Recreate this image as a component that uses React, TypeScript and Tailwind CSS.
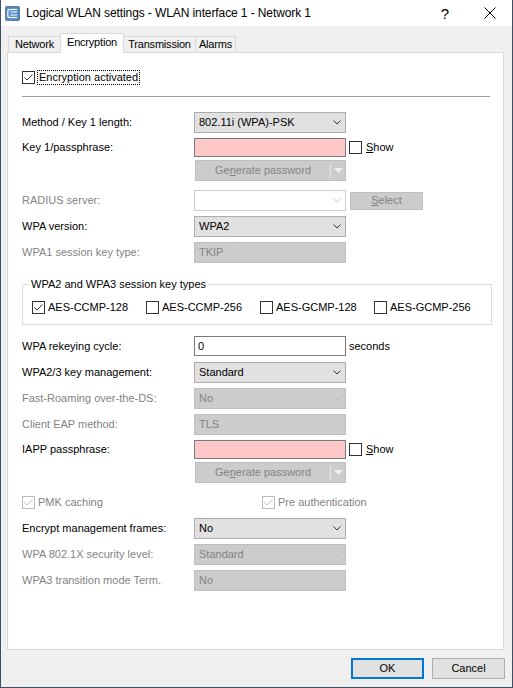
import React from 'react';
import clsx from 'clsx';

const GRAY = 'text-[#838383]';

function Chevron({ color }: { color: string }) {
  return (
    <svg width="8" height="5" viewBox="0 0 8 5" className="shrink-0">
      <path d="M0.5 0.5 L4 4 L7.5 0.5" fill="none" stroke={color} strokeWidth="1" />
    </svg>
  );
}

function CheckBox({ checked, disabled }: { checked?: boolean; disabled?: boolean }) {
  const color = disabled ? '#bcbcbc' : '#333333';
  return (
    <span
      className={clsx(
        'flex h-[13px] w-[13px] shrink-0 items-center justify-center border bg-white',
        disabled ? 'border-[#bcbcbc]' : 'border-[#333333]'
      )}
    >
      {checked && (
        <svg width="11" height="11" viewBox="0 0 11 11">
          <path d="M1.5 5.5 L4 8 L9.5 2.5" fill="none" stroke={color} strokeWidth="1" />
        </svg>
      )}
    </span>
  );
}

function Select({ value, disabled }: { value: string; disabled?: boolean }) {
  return (
    <div
      className={clsx(
        'flex h-[21px] w-[152px] items-center justify-between border pl-[4px] pr-[4px]',
        disabled ? 'border-[#bfbfbf] bg-[#cccccc] text-[#838383]' : 'border-[#adadad] bg-[#e1e1e1] text-black'
      )}
    >
      <span>{value}</span>
      <Chevron color={disabled ? '#bfbfbf' : '#333333'} />
    </div>
  );
}

function Row({
  label,
  disabled,
  className,
  children,
}: {
  label: string;
  disabled?: boolean;
  className?: string;
  children: React.ReactNode;
}) {
  return (
    <div className={clsx('flex items-center', className)}>
      <span className={clsx('w-[172px] shrink-0', disabled ? GRAY : 'text-black')}>{label}</span>
      {children}
    </div>
  );
}

function PassField() {
  return (
    <>
      <div className="h-[19px] w-[152px] border border-[#7a7a7a] bg-[#ffc8c8]" />
      <span className="ml-[3px] flex items-center gap-[4px]">
        <CheckBox />
        <span>
          <u>S</u>how
        </span>
      </span>
    </>
  );
}

function GenerateButton({ className }: { className?: string }) {
  return (
    <div className={clsx('ml-[173px] flex h-[21px] w-[151px] items-center border border-[#bfbfbf] bg-[#cccccc]', GRAY, className)}>
      <span className="flex-1 text-center">
        Ge<u>n</u>erate password
      </span>
      <span className="h-[15px] w-px bg-[#e6e6e6]" />
      <span className="flex w-[14px] justify-center">
        <svg width="9" height="5" viewBox="0 0 9 5">
          <path d="M0 0 H9 L4.5 5 Z" fill="#eeeeee" />
        </svg>
      </span>
    </div>
  );
}

const tabs = [
  { title: 'Network', w: 'w-[52px]' },
  { title: 'Encryption', w: 'w-[64px]', active: true },
  { title: 'Transmission', w: 'w-[72px]' },
  { title: 'Alarms', w: 'w-[40px]' },
];

const keyTypes = [
  { title: 'AES-CCMP-128', checked: true },
  { title: 'AES-CCMP-256' },
  { title: 'AES-GCMP-128' },
  { title: 'AES-GCMP-256' },
];

export default function App() {
  return (
    <div className="flex h-[688px] w-[513px] flex-col border-x border-b border-[#3c4f63] bg-[#f0f0f0] font-['Liberation_Sans',Arial,sans-serif] text-[11px] leading-[13px] text-black">
      {/* title bar */}
      <div className="flex h-[26px] shrink-0 items-center bg-white pl-[4px]">
        <svg width="15" height="15" viewBox="0 0 15 15" className="shrink-0">
          <rect x="0.5" y="0.5" width="14" height="14" rx="1" fill="#3f78b8" stroke="#6c7e90" />
          <rect x="1.5" y="1.5" width="12" height="12" fill="#5b95d0" />
          <path d="M12 3.5 H4.5 Q2.8 3.5 2.8 5.2 V9.8 Q2.8 11.5 4.5 11.5 H12" fill="none" stroke="#ffffff" strokeWidth="1.2" />
          <path d="M12 6 H5.5 M12 9 H5.5" fill="none" stroke="#ffffff" strokeWidth="1" />
        </svg>
        <span className="ml-[6px] text-[12px] tracking-[-0.1px]">Logical WLAN settings - WLAN interface 1 - Network 1</span>
        <span className="ml-auto w-[46px] text-center text-[15px]">?</span>
        <span className="flex w-[44px] justify-center">
          <svg width="12" height="12" viewBox="0 0 12 12">
            <path d="M0.5 0.5 L11.5 11.5 M11.5 0.5 L0.5 11.5" stroke="#000000" strokeWidth="1" />
          </svg>
        </span>
      </div>

      {/* tabs */}
      <div className="relative z-10 mt-[7px] -mb-px ml-[7px] flex h-[20px] items-end tracking-[-0.2px]">
        {tabs.map((tab, index) => (
          <div
            key={index}
            className={clsx(
              'flex items-center justify-center whitespace-nowrap border-t border-[#d9d9d9]',
              tab.w,
              tab.active ? 'h-[20px] border-x bg-white pb-[2px]' : 'mb-px h-[16px] bg-[#f0f0f0]',
              index === 0 && 'border-l',
              index > 1 && 'border-r'
            )}
          >
            {tab.title}
          </div>
        ))}
      </div>

      {/* panel */}
      <div className="ml-[6px] flex h-[598px] w-[497px] flex-col border border-[#d9d9d9] bg-white pl-[14px]">
        <div className="mt-[16px] flex h-[16px] items-center gap-[2px]">
          <CheckBox checked />
          <span className="border border-dotted border-black px-px leading-[13px]">Encryption activated</span>
        </div>
        <div className="mt-[11px] h-px w-[468px] bg-[#a0a0a0]" />

        <Row label="Method / Key 1 length:" className="mt-[15px]">
          <Select value="802.11i (WPA)-PSK" />
        </Row>
        <Row label="Key 1/passphrase:" className="mt-[5px]">
          <PassField />
        </Row>
        <GenerateButton className="mt-[3px]" />
        <Row label="RADIUS server:" disabled className="mt-[9px]">
          <div className="flex h-[21px] w-[152px] items-center justify-end border border-[#cccccc] bg-white pr-[4px]">
            <Chevron color="#cccccc" />
          </div>
          <div className={clsx('ml-[4px] flex h-[18px] w-[73px] items-center justify-center border border-[#bfbfbf] bg-[#cccccc]', GRAY)}>
            <span>
              <u>S</u>elect
            </span>
          </div>
        </Row>
        <Row label="WPA version:" className="mt-[5px]">
          <Select value="WPA2" />
        </Row>
        <Row label="WPA1 session key type:" disabled className="mt-[5px]">
          <Select value="TKIP" disabled />
        </Row>

        <fieldset className="mt-[15px] w-[470px] border border-[#dcdcdc] pt-[10px] pb-[10px]">
          <legend className="ml-[6px] px-[2px] leading-[13px]">WPA2 and WPA3 session key types</legend>
          <div className="flex h-[13px] items-center pl-[9px]">
            {keyTypes.map((k, index) => (
              <span key={index} className="flex w-[114px] items-center gap-[3px]">
                <CheckBox checked={k.checked} />
                <span>{k.title}</span>
              </span>
            ))}
          </div>
        </fieldset>

        <Row label="WPA rekeying cycle:" className="mt-[11px]">
          <div className="flex h-[20px] w-[152px] items-center border border-[#7a7a7a] bg-white pl-[3px]">0</div>
          <span className="ml-[3px]">seconds</span>
        </Row>
        <Row label="WPA2/3 key management:" className="mt-[6px]">
          <Select value="Standard" />
        </Row>
        <Row label="Fast-Roaming over-the-DS:" disabled className="mt-[5px]">
          <Select value="No" disabled />
        </Row>
        <Row label="Client EAP method:" disabled className="mt-[5px]">
          <Select value="TLS" disabled />
        </Row>
        <Row label="IAPP passphrase:" className="mt-[5px]">
          <PassField />
        </Row>
        <GenerateButton className="mt-[3px]" />

        <div className={clsx('mt-[13px] flex h-[13px] items-center', GRAY)}>
          <span className="flex w-[240px] items-center gap-[3px]">
            <CheckBox checked disabled />
            <span>PMK caching</span>
          </span>
          <span className="flex items-center gap-[3px]">
            <CheckBox checked disabled />
            <span>Pre authentication</span>
          </span>
        </div>

        <Row label="Encrypt management frames:" className="mt-[9px]">
          <Select value="No" />
        </Row>
        <Row label="WPA 802.1X security level:" disabled className="mt-[5px]">
          <Select value="Standard" disabled />
        </Row>
        <Row label="WPA3 transition mode Term." disabled className="mt-[5px]">
          <Select value="No" disabled />
        </Row>
      </div>

      {/* buttons */}
      <div className="mt-[8px] flex justify-end gap-[8px] pr-[7px]">
        <button className="flex h-[21px] w-[73px] items-center justify-center border-2 border-[#0078d7] bg-[#e1e1e1]">OK</button>
        <button className="flex h-[21px] w-[73px] items-center justify-center border border-[#adadad] bg-[#e1e1e1]">Cancel</button>
      </div>
    </div>
  );
}
